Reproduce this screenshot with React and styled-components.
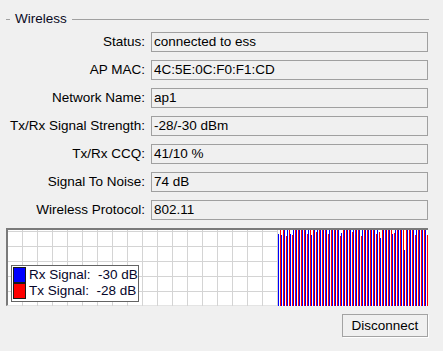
import React from 'react';
import styled, { createGlobalStyle } from 'styled-components';

const GlobalStyle = createGlobalStyle`
  html, body {
    margin: 0;
    padding: 0;
    background: #f0f0f0;
  }
  body {
    font-family: 'Liberation Sans', Arial, sans-serif;
    font-size: 13.5px;
    color: #000;
  }
`;

const Page = styled.div`
  width: 443px;
  height: 351px;
  box-sizing: border-box;
  padding-top: 12px;
  display: flex;
  flex-direction: column;
  background: #f0f0f0;
`;

const GroupHeader = styled.div`
  display: flex;
  align-items: center;
  height: 14px;
  padding: 0 14px 0 6px;
`;

const Rule = styled.div`
  height: 1px;
  background: #a0a0a0;
  width: ${(p) => (p.$grow ? 'auto' : '4px')};
  flex: ${(p) => (p.$grow ? 1 : 'none')};
`;

const GroupTitle = styled.span`
  padding: 0 5px;
  line-height: 14px;
  color: #0a0a1e;
`;

const Form = styled.div`
  display: grid;
  grid-template-columns: 145px 277px;
  column-gap: 6px;
  row-gap: 8px;
  margin-top: 6px;
`;

const Label = styled.div`
  text-align: right;
  line-height: 20px;
  white-space: nowrap;
`;

const Field = styled.div`
  height: 20px;
  box-sizing: border-box;
  border: 1px solid #a0a0a0;
  padding-left: 2px;
  line-height: 18px;
  white-space: nowrap;
  overflow: hidden;
`;

const Chart = styled.div`
  position: relative;
  margin: 8px 0 0 6px;
  width: 422px;
  height: 78px;
  box-sizing: border-box;
  border-top: 2px solid #7a7a7a;
  border-left: 2px solid #7a7a7a;
  border-bottom: 1px solid #e4e4e4;
  background: #fff;
  svg {
    display: block;
  }
`;

const Legend = styled.div`
  position: absolute;
  left: 3px;
  top: 35px;
  width: 128px;
  height: 37px;
  box-sizing: border-box;
  border: 1px solid #646464;
  background: #fff;
  padding: 1px 0 0 1px;
  display: flex;
  flex-direction: column;
`;

const LegendRow = styled.div`
  display: flex;
  align-items: center;
  height: 16px;
  gap: 3px;
`;

const Swatch = styled.div`
  width: 13px;
  height: 16px;
  box-sizing: border-box;
  border: 1px solid #1a1a1a;
  background: ${(p) => p.$color};
`;

const LegendText = styled.span`
  white-space: pre;
  line-height: 16px;
  color: #05052a;
`;

const Footer = styled.div`
  display: flex;
  justify-content: flex-end;
  padding-right: 15px;
  margin-top: 8px;
`;

const Button = styled.button`
  width: 86px;
  height: 23px;
  box-sizing: border-box;
  border: 1px solid #a3a3a3;
  box-shadow: 1px 1px 0 #ffffff;
  background: #f0f0f0;
  font-family: inherit;
  font-size: 13.5px;
  color: #000;
  padding: 0;
`;

const rows = [
  ['Status:', 'connected to ess'],
  ['AP MAC:', '4C:5E:0C:F0:F1:CD'],
  ['Network Name:', 'ap1'],
  ['Tx/Rx Signal Strength:', '-28/-30 dBm'],
  ['Tx/Rx CCQ:', '41/10 %'],
  ['Signal To Noise:', '74 dB'],
  ['Wireless Protocol:', '802.11'],
];

// small dips at the top of the bars, roughly like the reference
const dips = (seed, n) => {
  const out = [];
  let s = seed;
  for (let i = 0; i < n; i++) {
    s = (s * 9301 + 49297) % 233280;
    const r = s / 233280;
    out.push(r > 0.84 ? Math.round((r - 0.8) * 40) : 0);
  }
  return out;
};

const W = 420;
const H = 76;
const N = 50;
const X0 = 270;
const rx = dips(17, N);
const tx = dips(91, N);
rx[42] = 20;

function SignalChart() {
  const vLines = [];
  for (let x = 14.5; x < W; x += 15) vLines.push(x);
  const hLines = [];
  for (let y = H - 14.5; y > 0; y -= 15) hLines.push(y);

  return (
    <svg width={W} height={H}>
      {vLines.map((x) => (
        <line key={'v' + x} x1={x} x2={x} y1={0} y2={H} stroke="#d4d4d4" />
      ))}
      {hLines.map((y) => (
        <line key={'h' + y} x1={0} x2={W} y1={y} y2={y} stroke="#d4d4d4" />
      ))}
      <rect x={X0} y={0} width={W - X0} height={H} fill="#fff" />
      {rx.map((d, i) => (
        <rect key={'r' + i} x={X0 + i * 3} y={d} width={1} height={H - d} fill="#0000ff" />
      ))}
      {tx.map((d, i) => (
        <rect key={'t' + i} x={X0 + i * 3 + 2} y={d} width={1} height={H - d} fill="#ff0000" />
      ))}
    </svg>
  );
}

export default function App() {
  return (
    <Page>
      <GlobalStyle />
      <GroupHeader>
        <Rule />
        <GroupTitle>Wireless</GroupTitle>
        <Rule $grow />
      </GroupHeader>
      <Form>
        {rows.map(([label, value]) => (
          <React.Fragment key={label}>
            <Label>{label}</Label>
            <Field>{value}</Field>
          </React.Fragment>
        ))}
      </Form>
      <Chart>
        <SignalChart />
        <Legend>
          <LegendRow>
            <Swatch $color="#0000ff" />
            <LegendText>{'Rx Signal:  -30 dB'}</LegendText>
          </LegendRow>
          <LegendRow>
            <Swatch $color="#ff0000" />
            <LegendText>{'Tx Signal:  -28 dB'}</LegendText>
          </LegendRow>
        </Legend>
      </Chart>
      <Footer>
        <Button>Disconnect</Button>
      </Footer>
    </Page>
  );
}
